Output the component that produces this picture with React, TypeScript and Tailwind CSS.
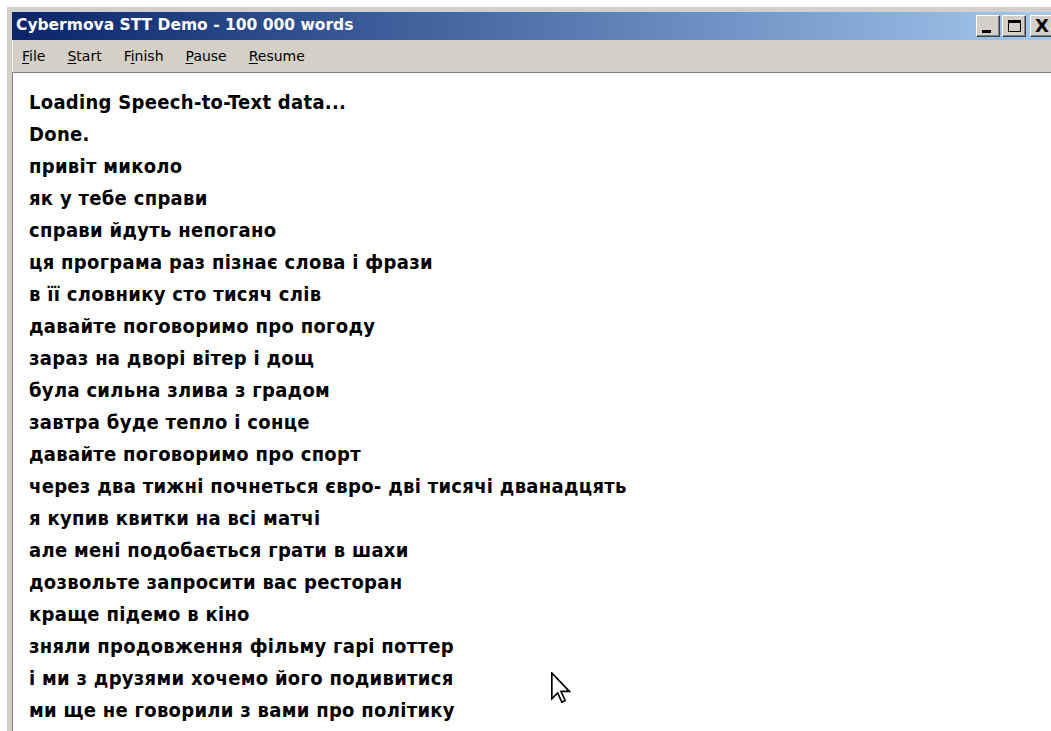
import React from "react";

const lines = [
  "Loading Speech-to-Text data...",
  "Done.",
  "привіт миколо",
  "як у тебе справи",
  "справи йдуть непогано",
  "ця програма раз пізнає слова і фрази",
  "в її словнику сто тисяч слів",
  "давайте поговоримо про погоду",
  "зараз на дворі вітер і дощ",
  "була сильна злива з градом",
  "завтра буде тепло і сонце",
  "давайте поговоримо про спорт",
  "через два тижні почнеться євро- дві тисячі дванадцять",
  "я купив квитки на всі матчі",
  "але мені подобається грати в шахи",
  "дозвольте запросити вас ресторан",
  "краще підемо в кіно",
  "зняли продовження фільму гарі поттер",
  "і ми з друзями хочемо його подивитися",
  "ми ще не говорили з вами про політику",
];

// menu entries, with the index of the accelerator letter
const menu: [string, number][] = [
  ["File", 0],
  ["Start", 0],
  ["Finish", 1],
  ["Pause", 0],
  ["Resume", 0],
];

const CaptionButton = ({ children }: { children: React.ReactNode }) => (
  <div className="flex h-[22px] w-[24px] items-center justify-center border-t border-l border-t-white border-l-white border-r border-b border-r-[#404040] border-b-[#404040] bg-[#d4d0c8] shadow-[inset_-1px_-1px_0_#808080]">
    {children}
  </div>
);

const App = () => {
  return (
    <div className="relative h-[731px] w-[1051px] overflow-hidden bg-white font-['DejaVu_Sans',sans-serif]">
      <div className="ml-[7px] mt-[7px] flex h-[724px] w-[1050px] flex-col border-t-[5px] border-l-[5px] border-t-[#d4d0c8] border-l-[#d4d0c8] bg-[#d4d0c8] shadow-[inset_1px_1px_0_#ececec]">
        {/* caption */}
        <div className="flex h-[28px] shrink-0 items-center bg-gradient-to-r from-[#0a246a] to-[#a6caf0] pl-[4px] pr-[3px]">
          <span className="text-[15.5px] font-bold text-white">
            Cybermova STT Demo - 100 000 words
          </span>
          <div className="ml-auto flex items-center gap-[2px]">
            <CaptionButton>
              <span className="mt-[10px] mr-[4px] block h-[3px] w-[9px] bg-black" />
            </CaptionButton>
            <CaptionButton>
              <span className="block h-[12px] w-[13px] border border-t-[3px] border-black" />
            </CaptionButton>
            <div className="ml-[2px]">
              <CaptionButton>
                <span className="text-[18px] font-bold leading-none text-black">X</span>
              </CaptionButton>
            </div>
          </div>
        </div>

        {/* menu bar */}
        <div className="flex h-[32px] shrink-0 items-center pl-[10px] text-[14px] text-black">
          {menu.map(([label, k]) => (
            <span key={label} className="mr-[22px]">
              {label.slice(0, k)}
              <span className="underline underline-offset-2">{label[k]}</span>
              {label.slice(k + 1)}
            </span>
          ))}
        </div>

        {/* output log */}
        <div className="flex-1 bg-white pl-[17px] pt-[14px] shadow-[inset_1px_1px_0_#808080]">
          {lines.map((line, i) => (
            <div
              key={i}
              className="h-[32px] font-['DejaVu_Sans_Condensed','DejaVu_Sans',sans-serif] text-[20px] font-bold leading-[32px] tracking-[0.3px] text-black font-stretch-condensed"
            >
              {line}
            </div>
          ))}
        </div>
      </div>

      {/* mouse pointer */}
      <svg
        className="absolute left-[551px] top-[672px]"
        width="20"
        height="32"
        viewBox="0 0 12 19"
      >
        <path
          d="M0.5 0.5 L0.5 16 L4 12.5 L6.5 18 L8.5 17 L6 11.5 L11 11.5 Z"
          fill="white"
          stroke="black"
          strokeWidth="1"
          strokeLinejoin="miter"
        />
      </svg>
    </div>
  );
};

export default App;
